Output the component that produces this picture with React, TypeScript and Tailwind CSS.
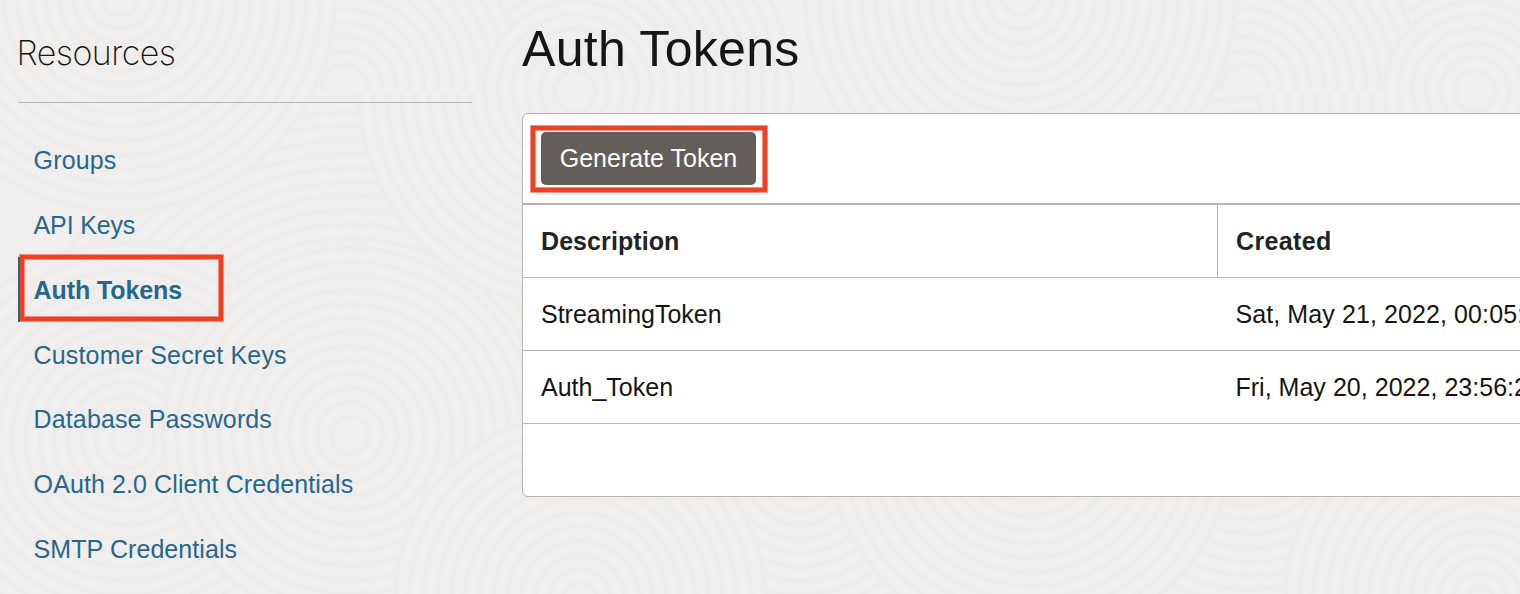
type Disc = { x: number; y: number; r: number; upper?: boolean };

const DISCS: Disc[] = [
  { x: 350, y: 435, r: 340 },
  { x: 1250, y: 435, r: 340 },
  { x: 345, y: 620, r: 120 },
  { x: 800, y: 470, r: 170 },
  { x: 575, y: 92, r: 219 },
  { x: 1475, y: 92, r: 219 },
  { x: 345, y: 88, r: 180, upper: true },
  { x: 1245, y: 88, r: 180, upper: true },
  { x: 1475, y: 92, r: 94, upper: true },
  { x: 575, y: 92, r: 94, upper: true },
  { x: 120, y: -4, r: 218 },
  { x: 1020, y: -4, r: 218 },
  { x: 125, y: 440, r: 200 },
  { x: 350, y: 435, r: 190 },
  { x: 1030, y: 440, r: 205 },
  { x: 580, y: 600, r: 188 },
  { x: 1480, y: 600, r: 198 },
];

const LINKS = [
  { label: "Groups", cls: "tracking-[0.15px]" },
  { label: "API Keys", cls: "tracking-[-0.15px]" },
  { label: "Auth Tokens", cls: "tracking-[-0.1px]", active: true },
  { label: "Customer Secret Keys", cls: "tracking-[0.15px]" },
  { label: "Database Passwords", cls: "tracking-[0.12px] pb-[1px]" },
  { label: "OAuth 2.0 Client Credentials", cls: "tracking-[0.1px]" },
  { label: "SMTP Credentials", cls: "tracking-[0.07px]" },
];

const TOKENS = [
  { description: "StreamingToken", created: "Sat, May 21, 2022, 00:05:41 UTC", cls: "tracking-[0.1px]" },
  { description: "Auth_Token", created: "Fri, May 20, 2022, 23:56:28 UTC", cls: "tracking-[0.03px]" },
];

function Backdrop() {
  return (
    <svg className="absolute inset-0" width="1520" height="594" viewBox="0 0 1520 594" aria-hidden="true">
      <defs>
        <clipPath id="upper">
          <rect width="1520" height="92" />
        </clipPath>
        <filter id="soft">
          <feGaussianBlur stdDeviation="1" />
        </filter>
      </defs>
      <rect width="1520" height="594" fill="#f0efed" />
      <g filter="url(#soft)">
        {DISCS.map((d, i) => (
          <g key={i} fill="none" stroke="#ecebe9" strokeWidth="5" clipPath={d.upper ? "url(#upper)" : undefined}>
            <circle cx={d.x} cy={d.y} r={d.r} fill="#f0efed" stroke="none" />
            {Array.from({ length: Math.floor(d.r / 14) }, (_, k) => (
              <circle key={k} cx={d.x} cy={d.y} r={d.r - 3 - k * 14} />
            ))}
          </g>
        ))}
      </g>
    </svg>
  );
}

function Sidebar() {
  return (
    <aside className="w-[454px] shrink-0">
      <h2 className="h-[103px] border-b border-[#b7b5b3] pt-[32px] font-[Inter] text-[34px] leading-[42px] font-extralight tracking-[-0.55px] text-[#161513]">
        <span className="-ml-[1.5px]">Resources</span>
      </h2>
      <nav className="pt-[25px]">
        {LINKS.map((l) => (
          <a
            key={l.label}
            className={
              "relative flex h-[64.8px] items-center whitespace-nowrap pl-[15.6px] text-[#27678c] " +
              l.cls +
              (l.active ? " font-bold" : "")
            }
          >
            {l.label}
            {l.active && (
              <span className="absolute top-[-2.6px] left-[2px] h-[66px] w-[203px] border-4 border-[#ee4024] shadow-[0_0_0_1px_#f2907f,inset_0_0_0_1px_#f2907f]" />
            )}
            {l.active && <span className="absolute top-[-0.6px] left-0 h-[65px] w-[2px] bg-[#27678c]" />}
          </a>
        ))}
      </nav>
    </aside>
  );
}

function TokenPanel() {
  return (
    <section className="h-[384px] w-[1100px] rounded-[6px] border border-[#b9b3ae] bg-white text-[#161513]">
      <div className="flex h-[91px] border-b-2 border-[#b5b5b5] pt-[18px] pl-[18px]">
        <div className="relative h-[53px]">
          <button className="h-[53px] w-[215px] rounded-[5px] bg-[#645e5a] pb-[2px] text-white">Generate Token</button>
          <span className="absolute top-[-6px] left-[-10px] h-[66px] w-[236px] border-4 border-[#ee4024] shadow-[0_0_0_1px_#f2907f,inset_0_0_0_1px_#f2907f]" />
        </div>
      </div>
      <div className="flex h-[73px] border-b border-[#b9b9bb] font-bold text-[#222424]">
        <div className="flex w-[695px] items-center border-r border-[#b9b9bb] pl-[18px] tracking-[0.08px]">
          Description
        </div>
        <div className="flex items-center pl-[18px] tracking-[0.35px]">Created</div>
      </div>
      {TOKENS.map((t) => (
        <div key={t.description} className="flex h-[73px] items-center border-b border-[#b9b7b6] whitespace-nowrap">
          <div className="w-[695px] pl-[18px]">{t.description}</div>
          <div className={"pl-[17.4px] " + t.cls}>{t.created}</div>
        </div>
      ))}
    </section>
  );
}

export default function App() {
  return (
    <div className="relative h-[594px] w-full overflow-hidden bg-[#f0efed] font-['Liberation_Sans',sans-serif] text-[25px] leading-[30px]">
      <Backdrop />
      <div className="relative flex gap-[50px] pl-[18px]">
        <Sidebar />
        <main className="shrink-0">
          <h1 className="h-[113px] pt-[19px] text-[50px] leading-[60px] tracking-[0.3px] text-[#161513]">
            Auth Tokens
          </h1>
          <TokenPanel />
        </main>
      </div>
    </div>
  );
}
